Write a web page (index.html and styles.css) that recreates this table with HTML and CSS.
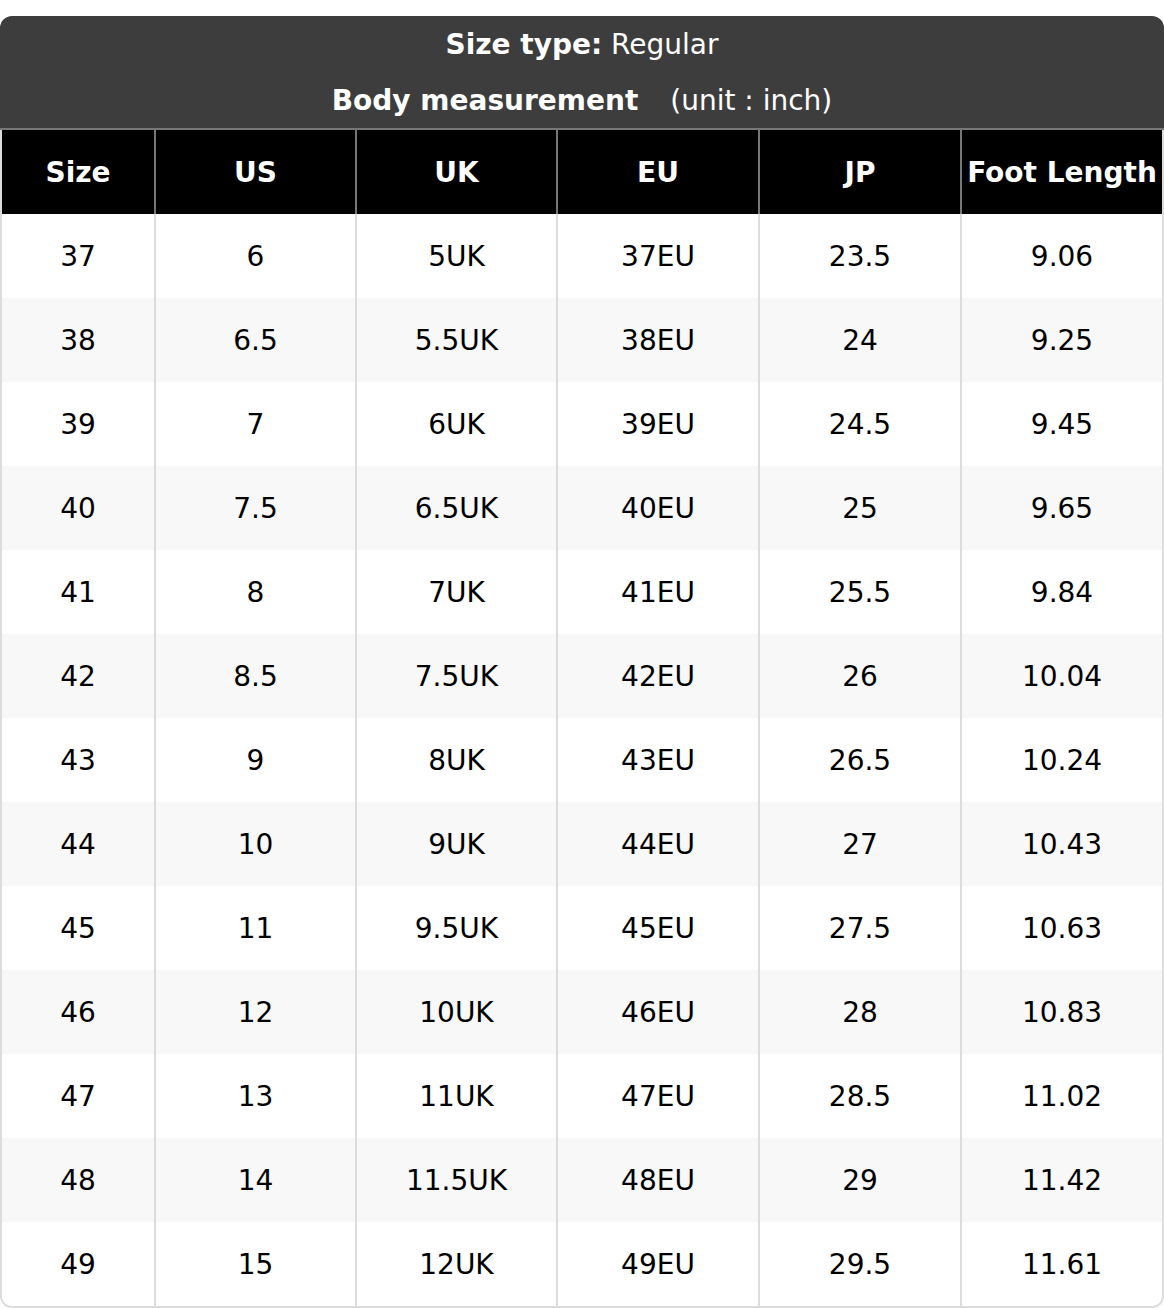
FILE: index.html
```html
<!DOCTYPE html>
<html>
<head>
<meta charset="utf-8">
<link rel="stylesheet" href="styles.css">
</head>
<body>
<div class="card">
  <div class="title">
    <div class="title-row"><b>Size type:</b> Regular</div>
    <div class="title-row"><b>Body measurement</b><span class="unit">(unit : inch)</span></div>
  </div>
  <div class="body">
    <table class="chart">
      <colgroup>
        <col class="c1"><col class="c2"><col class="c3"><col class="c4"><col class="c5"><col class="c6">
      </colgroup>
      <thead>
        <tr><th>Size</th><th>US</th><th>UK</th><th>EU</th><th>JP</th><th>Foot Length</th></tr>
      </thead>
      <tbody>
        <tr><td>37</td><td>6</td><td>5UK</td><td>37EU</td><td>23.5</td><td>9.06</td></tr>
        <tr><td>38</td><td>6.5</td><td>5.5UK</td><td>38EU</td><td>24</td><td>9.25</td></tr>
        <tr><td>39</td><td>7</td><td>6UK</td><td>39EU</td><td>24.5</td><td>9.45</td></tr>
        <tr><td>40</td><td>7.5</td><td>6.5UK</td><td>40EU</td><td>25</td><td>9.65</td></tr>
        <tr><td>41</td><td>8</td><td>7UK</td><td>41EU</td><td>25.5</td><td>9.84</td></tr>
        <tr><td>42</td><td>8.5</td><td>7.5UK</td><td>42EU</td><td>26</td><td>10.04</td></tr>
        <tr><td>43</td><td>9</td><td>8UK</td><td>43EU</td><td>26.5</td><td>10.24</td></tr>
        <tr><td>44</td><td>10</td><td>9UK</td><td>44EU</td><td>27</td><td>10.43</td></tr>
        <tr><td>45</td><td>11</td><td>9.5UK</td><td>45EU</td><td>27.5</td><td>10.63</td></tr>
        <tr><td>46</td><td>12</td><td>10UK</td><td>46EU</td><td>28</td><td>10.83</td></tr>
        <tr><td>47</td><td>13</td><td>11UK</td><td>47EU</td><td>28.5</td><td>11.02</td></tr>
        <tr><td>48</td><td>14</td><td>11.5UK</td><td>48EU</td><td>29</td><td>11.42</td></tr>
        <tr><td>49</td><td>15</td><td>12UK</td><td>49EU</td><td>29.5</td><td>11.61</td></tr>
      </tbody>
    </table>
  </div>
</div>
</body>
</html>
```
FILE: styles.css
```css
html, body {
  margin: 0;
  padding: 0;
  background: #ffffff;
}
body {
  padding-top: 16px;
  font-family: "DejaVu Sans", "Liberation Sans", sans-serif;
  font-size: 28px;
  color: #000;
}
.card {
  width: 1164px;
}
.title {
  background: #3d3d3d;
  color: #fff;
  border-radius: 12px 12px 0 0;
  height: 112px;
  border-bottom: 2px solid #777;
}
.title-row {
  height: 56px;
  display: flex;
  align-items: center;
  justify-content: center;
  white-space: pre;
}
.unit {
  margin-left: 32px;
}
.body {
  border: 2px solid #dcdcdc;
  border-top: none;
  border-radius: 0 0 12px 12px;
  overflow: hidden;
}
.chart {
  width: 1160px;
  table-layout: fixed;
  border-collapse: separate;
  border-spacing: 0;
}
.c1 { width: 152px; }
.c2 { width: 201px; }
.c3 { width: 201px; }
.c4 { width: 202px; }
.c5 { width: 202px; }
.c6 { width: 202px; }
.chart th, .chart td {
  padding: 0;
  text-align: center;
  vertical-align: middle;
  height: 84px;
  box-sizing: border-box;
  white-space: nowrap;
}
.chart th {
  background: #000;
  color: #fff;
  font-weight: bold;
}
.chart th + th {
  border-left: 2px solid #777;
}
.chart td + td {
  border-left: 2px solid #dcdcdc;
}
.chart tbody tr:nth-child(odd) td {
  background: #fff;
}
.chart tbody tr:nth-child(even) td {
  background: #f8f8f8;
}
```
